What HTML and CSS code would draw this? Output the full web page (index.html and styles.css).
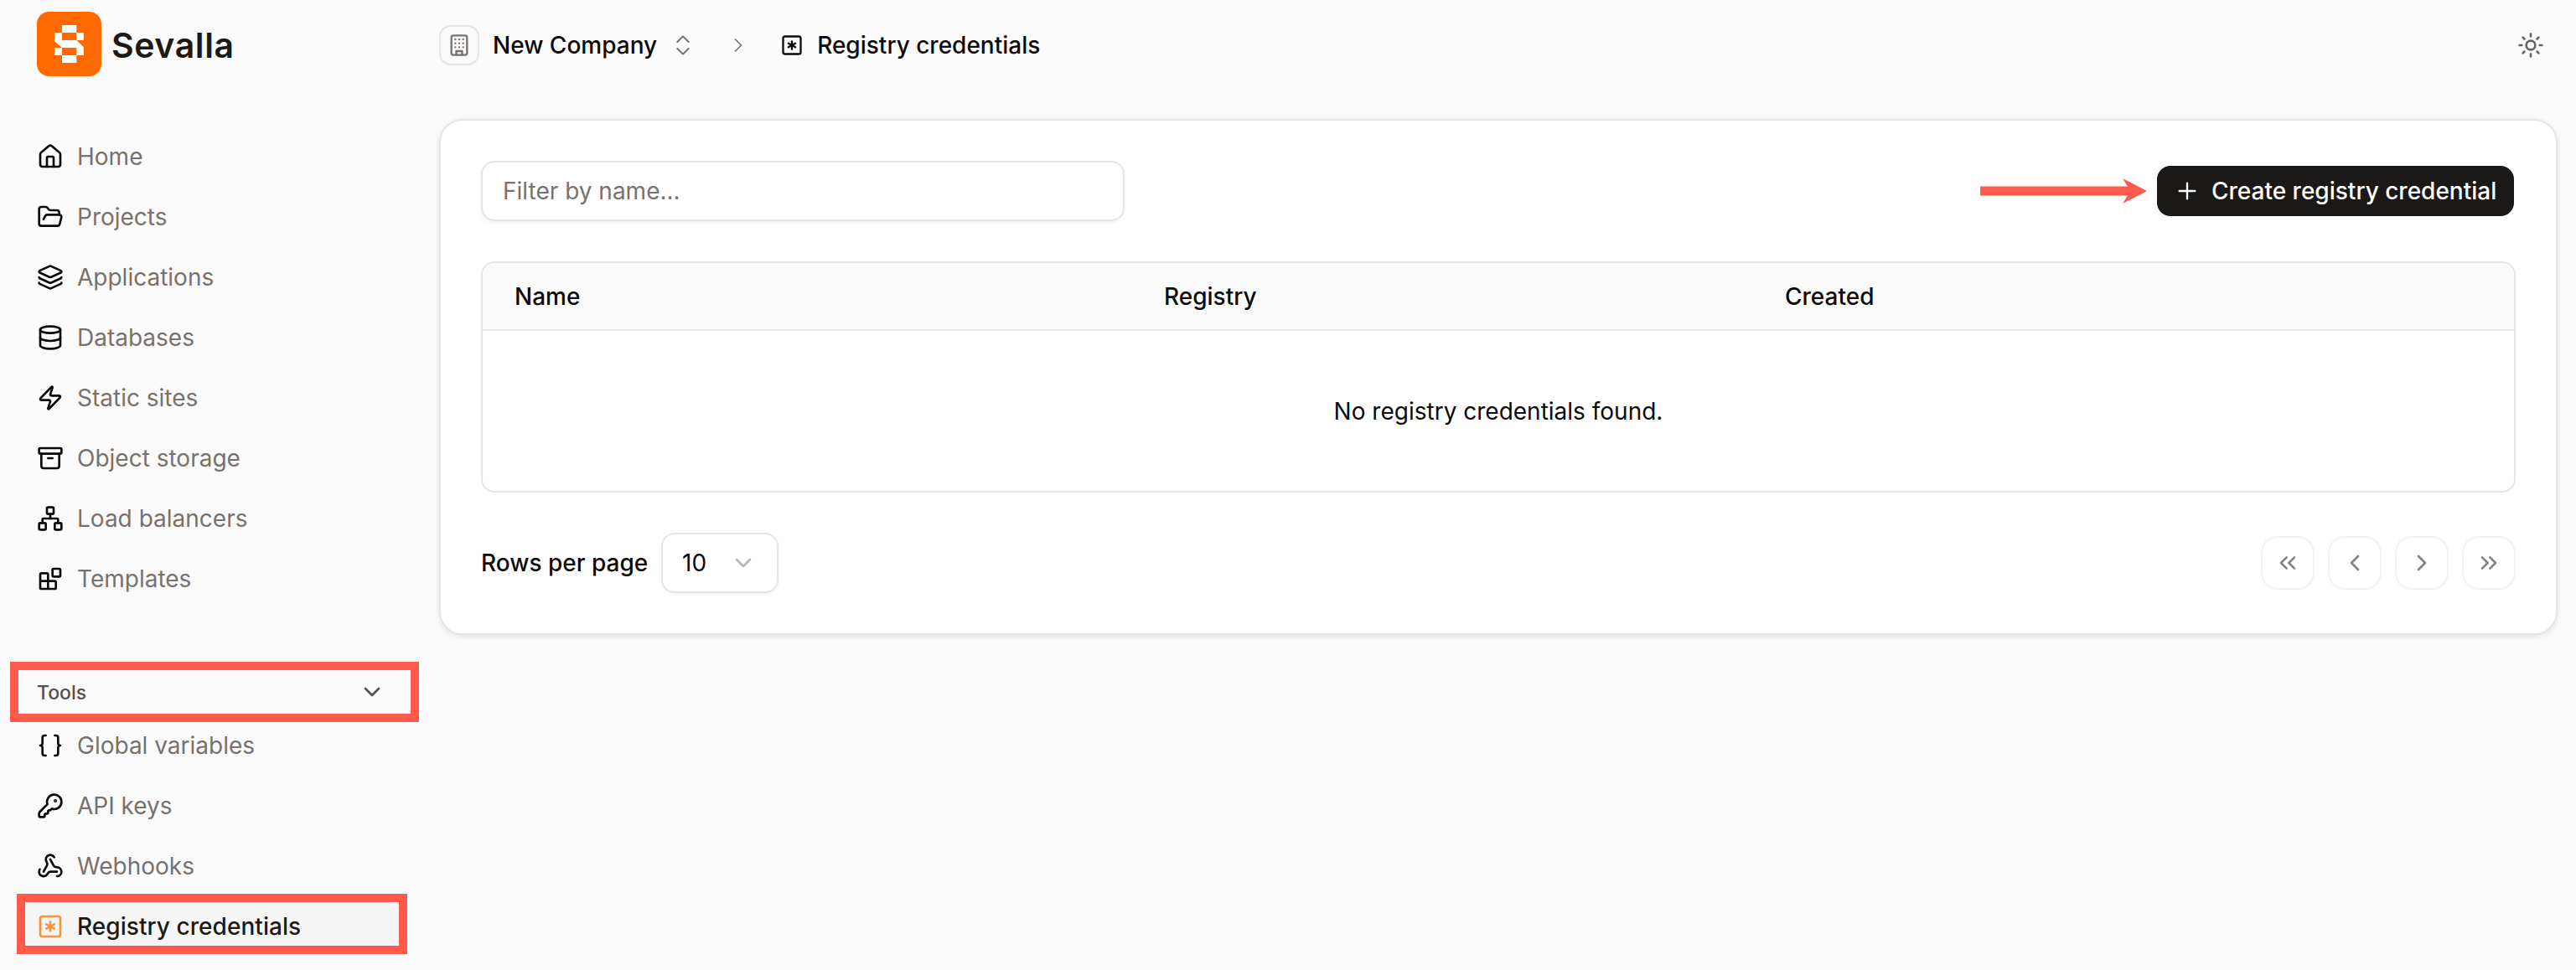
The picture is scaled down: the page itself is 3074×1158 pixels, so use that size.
FILE: index.html
```html
<!DOCTYPE html>
<html lang="en">
<head>
  <meta charset="UTF-8" />
  <meta name="viewport" content="width=device-width, initial-scale=1.0"/>
  <title>Registry credentials - Sevalla</title>
  <link rel="stylesheet" href="styles.css">
</head>
<body>

  <div class="layout">
    <aside class="sidebar">
      <a class="brand" href="#">
        <svg class="brand-logo" viewBox="0 0 77 77">
          <rect width="77" height="77" rx="14.5" fill="#ff6900"/>
          <path fill="#fff" d="M30 16h17.300v9h8.700v9h-8.700l8.700 8.300v9.700h-8.700v9h-17.300v-9h-8.700v-9h8.700l-8.700-7.500v-10.500h8.700z"/>
          <path fill="#ff6900" d="M30 25h17.300v9h-17.300zM30 43h17.300v9h-17.300z"/>
        </svg>
        <span class="brand-name">Sevalla</span>
      </a>

      <nav class="nav">
        <a class="nav-item" href="#">
          <svg class="icon" viewBox="0 0 24 24"><path d="M15 21v-8a1 1 0 0 0-1-1h-4a1 1 0 0 0-1 1v8"/><path d="M3 10a2 2 0 0 1 .709-1.528l7-5.999a2 2 0 0 1 2.582 0l7 5.999A2 2 0 0 1 21 10v9a2 2 0 0 1-2 2H5a2 2 0 0 1-2-2z"/></svg>
          <span>Home</span>
        </a>
        <a class="nav-item" href="#">
          <svg class="icon" viewBox="0 0 24 24"><path d="m6 14 1.450-2.900A2 2 0 0 1 9.240 10H20a2 2 0 0 1 1.940 2.500l-1.550 6a2 2 0 0 1-1.940 1.500H4a2 2 0 0 1-2-2V5a2 2 0 0 1 2-2h3.930a2 2 0 0 1 1.660.9l.82 1.200a2 2 0 0 0 1.660.9H18a2 2 0 0 1 2 2v2"/></svg>
          <span>Projects</span>
        </a>
        <a class="nav-item" href="#">
          <svg class="icon" viewBox="0 0 24 24"><path d="M12.830 2.180a2 2 0 0 0-1.660 0L2.600 6.080a1 1 0 0 0 0 1.830l8.580 3.910a2 2 0 0 0 1.660 0l8.580-3.900a1 1 0 0 0 0-1.830z"/><path d="M2 12a1 1 0 0 0 .58.910l8.600 3.910a2 2 0 0 0 1.650 0l8.580-3.900A1 1 0 0 0 22 12"/><path d="M2 17a1 1 0 0 0 .58.910l8.600 3.910a2 2 0 0 0 1.650 0l8.580-3.900A1 1 0 0 0 22 17"/></svg>
          <span>Applications</span>
        </a>
        <a class="nav-item" href="#">
          <svg class="icon" viewBox="0 0 24 24"><ellipse cx="12" cy="5" rx="9" ry="3"/><path d="M3 5v14a9 3 0 0 0 18 0V5"/><path d="M3 12a9 3 0 0 0 18 0"/></svg>
          <span>Databases</span>
        </a>
        <a class="nav-item" href="#">
          <svg class="icon" viewBox="0 0 24 24"><path d="M4 14a1 1 0 0 1-.78-1.630l9.900-10.200a.5.5 0 0 1 .86.460l-1.920 6.020A1 1 0 0 0 13 10h7a1 1 0 0 1 .78 1.630l-9.900 10.200a.5.5 0 0 1-.86-.460l1.920-6.020A1 1 0 0 0 11 14z"/></svg>
          <span>Static sites</span>
        </a>
        <a class="nav-item" href="#">
          <svg class="icon" viewBox="0 0 24 24"><rect width="20" height="5" x="2" y="3" rx="1"/><path d="M4 8v11a2 2 0 0 0 2 2h12a2 2 0 0 0 2-2V8"/><path d="M10 12h4"/></svg>
          <span>Object storage</span>
        </a>
        <a class="nav-item" href="#">
          <svg class="icon" viewBox="0 0 24 24"><rect x="16" y="16" width="6" height="6" rx="1"/><rect x="2" y="16" width="6" height="6" rx="1"/><rect x="9" y="2" width="6" height="6" rx="1"/><path d="M5 16v-3a1 1 0 0 1 1-1h12a1 1 0 0 1 1 1v3"/><path d="M12 12V8"/></svg>
          <span>Load balancers</span>
        </a>
        <a class="nav-item" href="#">
          <svg class="icon" viewBox="0 0 24 24"><rect width="7" height="7" x="14" y="3" rx="1"/><path d="M10 21V8a1 1 0 0 0-1-1H4a1 1 0 0 0-1 1v12a1 1 0 0 0 1 1h12a1 1 0 0 0 1-1v-5a1 1 0 0 0-1-1H3"/></svg>
          <span>Templates</span>
        </a>
      </nav>

      <!-- Tools group -->
      <div class="nav-group highlight">
        <span>Tools</span>
        <svg class="icon" viewBox="0 0 24 24"><path d="m6 9 6 6 6-6"/></svg>
      </div>
      <nav class="nav nav-tools">
        <a class="nav-item" href="#">
          <svg class="icon" viewBox="0 0 24 24"><path d="M8 3H7a2 2 0 0 0-2 2v5a2 2 0 0 1-2 2 2 2 0 0 1 2 2v5c0 1.100.9 2 2 2h1"/><path d="M16 21h1a2 2 0 0 0 2-2v-5c0-1.100.9-2 2-2a2 2 0 0 1-2-2V5a2 2 0 0 0-2-2h-1"/></svg>
          <span>Global variables</span>
        </a>
        <a class="nav-item" href="#">
          <svg class="icon" viewBox="0 0 24 24"><path d="M2.586 17.414A2 2 0 0 0 2 18.828V21a1 1 0 0 0 1 1h3a1 1 0 0 0 1-1v-1a1 1 0 0 1 1-1h1a1 1 0 0 0 1-1v-1a1 1 0 0 1 1-1h.172a2 2 0 0 0 1.414-.586l.814-.814a6.500 6.500 0 1 0-4-4z"/><circle cx="16.500" cy="7.500" r=".5" fill="currentColor"/></svg>
          <span>API keys</span>
        </a>
        <a class="nav-item" href="#">
          <svg class="icon" viewBox="0 0 24 24"><path d="M18 16.980h-5.990c-1.100 0-1.950.940-2.480 1.900A4 4 0 0 1 2 17c.01-.7.200-1.400.570-2"/><path d="m6 17 3.130-5.780c.53-.970.100-2.180-.5-3.100a4 4 0 1 1 6.890-4.060"/><path d="m12 6 3.130 5.730C15.660 12.700 16.900 13 18 13a4 4 0 0 1 0 8"/></svg>
          <span>Webhooks</span>
        </a>
        <a class="nav-item active highlight" href="#">
          <svg class="icon" viewBox="0 0 24 24"><rect width="18" height="18" x="3" y="3" rx="2"/><path d="M12 8v8"/><path d="m8.500 14 7-4"/><path d="m8.500 10 7 4"/></svg>
          <span>Registry credentials</span>
        </a>
      </nav>
    </aside>

    <main class="main">
      <header class="topbar">
        <span class="company-badge">
          <svg class="icon" viewBox="0 0 24 24"><rect width="16" height="20" x="4" y="2" rx="2"/><path d="M9 22v-4h6v4"/><path d="M8 6h.01M16 6h.01M12 6h.01M12 10h.01M12 14h.01M16 10h.01M16 14h.01M8 10h.01M8 14h.01"/></svg>
        </span>
        <span class="company-name">New Company</span>
        <svg class="icon icon-switch" viewBox="0 0 24 24"><path d="m7 15 5 5 5-5"/><path d="m7 9 5-5 5 5"/></svg>
        <svg class="icon icon-separator" viewBox="0 0 24 24"><path d="m9 18 6-6-6-6"/></svg>
        <svg class="icon icon-page" viewBox="0 0 24 24"><rect width="18" height="18" x="3" y="3" rx="2"/><path d="M12 8v8"/><path d="m8.500 14 7-4"/><path d="m8.500 10 7 4"/></svg>
        <span class="page-name">Registry credentials</span>
        <svg class="icon icon-theme" viewBox="0 0 24 24"><circle cx="12" cy="12" r="4"/><path d="M12 2v2M12 20v2M4.930 4.930l1.410 1.410M17.660 17.660l1.410 1.410M2 12h2M20 12h2M6.340 17.660l-1.410 1.410M19.070 4.930l-1.410 1.410"/></svg>
      </header>

      <section class="card">
        <div class="toolbar">
          <input class="filter" type="text" placeholder="Filter by name...">
          <div class="toolbar-action">
            <svg class="arrow" viewBox="0 0 200 30"><path fill="#ff5a4c" d="M0 9.500h176l-6-9.500 29 15-29 15 6-9.500H0z"/></svg>
            <button class="create-button">
              <svg class="icon" viewBox="0 0 24 24"><path d="M5 12h14"/><path d="M12 5v14"/></svg>
              <span>Create registry credential</span>
            </button>
          </div>
        </div>

        <div class="table">
          <div class="table-head">
            <span>Name</span>
            <span>Registry</span>
            <span>Created</span>
          </div>
          <div class="table-empty">No registry credentials found.</div>
        </div>

        <div class="table-footer">
          <span class="rows-label">Rows per page</span>
          <div class="select">
            <span>10</span>
            <svg class="icon" viewBox="0 0 24 24"><path d="m6 9 6 6 6-6"/></svg>
          </div>
          <div class="pagination">
            <button><svg class="icon" viewBox="0 0 24 24"><path d="m11 17-5-5 5-5"/><path d="m18 17-5-5 5-5"/></svg></button>
            <button><svg class="icon" viewBox="0 0 24 24"><path d="m15 18-6-6 6-6"/></svg></button>
            <button><svg class="icon" viewBox="0 0 24 24"><path d="m9 18 6-6-6-6"/></svg></button>
            <button><svg class="icon" viewBox="0 0 24 24"><path d="m6 17 5-5-5-5"/><path d="m13 17 5-5-5-5"/></svg></button>
          </div>
        </div>
      </section>
    </main>
  </div>

</body>
</html>
```
FILE: styles.css
```css
* {margin: 0;padding: 0;box-sizing: border-box;}

body {
  font-family: Inter, 'Liberation Sans', sans-serif;
  font-size: 28px;
  line-height: 40px;
  background: #fafafa;
  color: #0c0a09;
}

a {color: inherit;text-decoration: none;}
button, input {font: inherit;}

.icon {
  width: 32px;
  height: 32px;
  flex: none;
  fill: none;
  stroke: currentColor;
  stroke-width: 2;
  stroke-linecap: round;
  stroke-linejoin: round;
}

.layout {
  display: flex;
  height: 1158px;
  overflow: hidden;
}

/* Sidebar */
.sidebar {
  width: 524px;
  flex: none;
  padding-top: 14px;
}

.brand {
  display: flex;
  align-items: center;
  height: 77px;
  margin-left: 44px;
  gap: 12px;
}

.brand-logo {width: 77px;height: 77px;}
.brand-name {
  padding-top: 3px;
  font-size: 41px;
  font-weight: 600;
  letter-spacing: 0.6px;
  color: #1c1917;
}

.nav {
  display: flex;
  flex-direction: column;
  margin: 60px 38px 0 20px;
}

.nav-tools {margin-top: -8px;}

.nav-item {
  display: flex;
  align-items: center;
  gap: 16px;
  height: 72px;
  padding-left: 24px;
}

.nav-item span {color: #78716c;}
.nav-item .icon {color: #0c0a09;}

.highlight {border: 10px solid #ff5a4c;}

.nav-item.active {
  margin-top: -3px;
  padding: 6px 0 0 14px;
  background: #f5f5f5;
}

.nav-item.active span {color: #1c1917;font-weight: 500;letter-spacing: 0.05px;}
.nav-item.active .icon {color: #fb923c;}

.nav-group {
  display: flex;
  align-items: center;
  justify-content: space-between;
  width: 488px;
  height: 72px;
  margin: 63px 0 0 12px;
  padding: 0 30px 0 22px;
  font-size: 23px;
  font-weight: 500;
  color: #525252;
}

.nav-group span {padding-top: 2px;}

/* Main column */
.main {
  flex: 1;
  padding-right: 22px;
}

.topbar {
  display: flex;
  align-items: center;
  height: 108px;
  font-weight: 500;
}

.company-badge {
  display: flex;
  align-items: center;
  justify-content: center;
  width: 48px;
  height: 48px;
  border: 2px solid #e7e5e4;
  border-radius: 14px;
  color: #78716c;
}

.company-badge .icon {width: 28px;height: 28px;}
.company-name {margin-left: 16px;}
.icon-switch {margin-left: 15px;stroke-width: 1.5;color: #78716c;}
.icon-separator {width: 28px;height: 28px;margin-left: 36px;stroke-width: 1.5;color: #78716c;}
.icon-page {width: 28px;height: 28px;margin-left: 36px;}
.page-name {margin-left: 16px;}
.icon-theme {margin: 0 16px 0 auto;color: #66625f;}

.card {
  height: 616px;
  margin-top: 34px;
  padding: 48px;
  background: #fff;
  border: 2px solid #e5e5e5;
  border-radius: 28px;
  box-shadow: 0 2px 6px rgba(0, 0, 0, 0.1);
}

.toolbar {
  display: flex;
  align-items: center;
  justify-content: space-between;
}

.filter {
  width: 768px;
  height: 72px;
  padding: 0 24px;
  border: 2px solid #e5e5e5;
  border-radius: 16px;
  background: #fff;
  box-shadow: 0 2px 4px rgba(0, 0, 0, 0.05);
}

.filter::placeholder {color: #78716c;opacity: 1;}

.toolbar-action {
  display: flex;
  align-items: center;
  gap: 11px;
  margin-right: 2px;
}

.arrow {width: 200px;height: 30px;}

.create-button {
  display: flex;
  align-items: center;
  gap: 13px;
  width: 426px;
  height: 60px;
  padding: 0 20px;
  border: none;
  border-radius: 16px;
  background: #1a1917;
  color: #fff;
  font-weight: 500;
  white-space: nowrap;
}

.create-button .icon {stroke-width: 1.75;}

/* Table */
.table {
  margin-top: 48px;
  border: 2px solid #e5e5e5;
  border-radius: 16px;
  overflow: hidden;
}

.table-head {
  display: grid;
  grid-template-columns: 775px 741px 1fr;
  align-items: center;
  height: 81px;
  padding-left: 38px;
  border-bottom: 2px solid #e5e5e5;
  background: #fafafa;
  font-weight: 500;
}

.table-empty {
  display: flex;
  align-items: center;
  justify-content: center;
  height: 191px;
}

.table-footer {
  display: flex;
  align-items: center;
  margin-top: 48px;
}

.rows-label {width: 215px;font-weight: 500;}

.select {
  display: flex;
  align-items: center;
  justify-content: space-between;
  width: 140px;
  height: 72px;
  padding: 0 24px 0 23px;
  border: 2px solid #e5e5e5;
  border-radius: 16px;
  box-shadow: 0 2px 4px rgba(0, 0, 0, 0.05);
}

.select .icon {color: #b5b5b5;}

.pagination {
  display: flex;
  gap: 16px;
  margin-left: auto;
}

.pagination button {
  display: flex;
  align-items: center;
  justify-content: center;
  width: 64px;
  height: 64px;
  border: 2px solid #f2f2f0;
  border-radius: 20px;
  background: #fff;
  color: #858484;
}
```
